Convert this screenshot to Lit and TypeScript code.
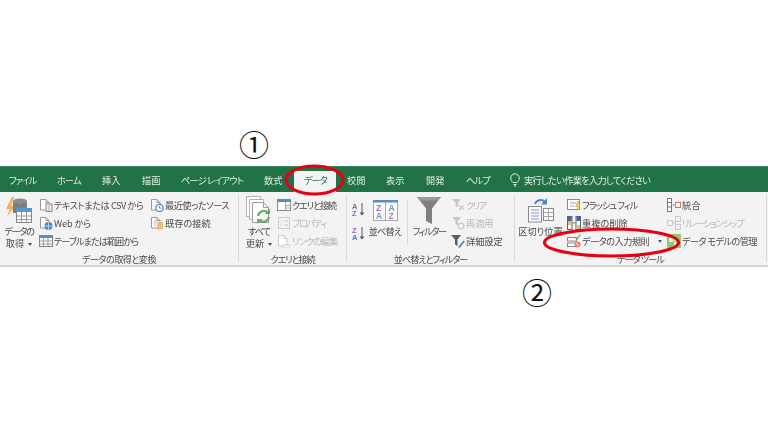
import { LitElement, html, css, svg } from "lit";
import { customElement } from "lit/decorators.js";

const page = (x: unknown, color = "#8a8a8a") => html`<svg viewBox="0 0 14 14" width="14" height="14">${svg`<path d="M1.500 1.500h5.500l3 3v7.500h-8.500z" fill="#fff" stroke="${color}"/><path d="M7 1.500v3h3" fill="none" stroke="${color}"/>`}${x}</svg>`;

const icons: Record<string, unknown> = {
  getData: html`<svg viewBox="0 0 26 27" width="26" height="27">${svg`
    <path d="M6 0 0 12h4l-3 8 8-11H5l3-9z" fill="#f0a33c"/>
    <ellipse cx="14" cy="4" rx="7" ry="2.500" fill="#7b7b7b"/>
    <path d="M7 4v12h7v-3h7V4c-1 3-13 3-14 0z" fill="#6a6a6a"/>
    <rect x="10.500" y="11.500" width="15" height="14" fill="#fff" stroke="#6f6f6f"/>
    <rect x="10" y="11" width="16" height="4" fill="#3f86c8"/>
    <path d="M10.500 19h15M10.500 22.500h15M15.500 15v10M20.500 15v10" stroke="#8c8c8c" fill="none"/>`}</svg>`,
  text: page(svg`<rect x="7" y="6" width="6" height="7.500" fill="#fff" stroke="#777"/><path d="M8.500 8h3M8.500 10h3M8.500 12h3" stroke="#999"/>`),
  web: page(svg`<circle cx="9.500" cy="10" r="4" fill="#2f79bd"/><path d="M5.500 10h8M9.500 6v8" stroke="#cfe3f5" stroke-width=".7"/>`),
  table: html`<svg viewBox="0 0 14 14" width="14" height="14">${svg`<rect x=".5" y="1.500" width="13" height="11" fill="#fff" stroke="#6f6f6f"/><rect x="0" y="1" width="14" height="3" fill="#3f7fb8"/><path d="M.5 7h13M.5 10h13M4.500 4v8M9 4v8" stroke="#909090"/>`}</svg>`,
  recent: page(svg`<circle cx="9.500" cy="10" r="3.700" fill="#fff" stroke="#2f79bd" stroke-width="1.300"/><path d="M9.500 8v2.200h2" stroke="#555" fill="none" stroke-width=".8"/>`),
  existing: page(svg`<rect x="7" y="6" width="6" height="7.500" fill="#efb75a"/><path d="M4 5h3M4 7h2M4 9h2" stroke="#aaa"/>`),
  refresh: html`<svg viewBox="0 0 26 28" width="26" height="28">${svg`
    <path d="M.5.500h14v3H4v17H.5z" fill="#fff" stroke="#a8a8a8"/>
    <path d="M3.500 3.500h14v3H7v17H3.500z" fill="#fff" stroke="#a8a8a8"/>
    <path d="M6.500 6.500h11l5 5v15h-16z" fill="#fff" stroke="#8f8f8f"/>
    <path d="M17.500 6.500v5h5" fill="none" stroke="#8f8f8f"/>
    <path d="M12 20a6 6 0 0 1 10-3.500M23 21a6 6 0 0 1-10 3" fill="none" stroke="#4da04d" stroke-width="2.200"/>
    <path d="M24 12.500v5.500h-5.500zM11 28v-5h5.500z" fill="#4da04d"/>`}</svg>`,
  query: html`<svg viewBox="0 0 14 14" width="14" height="14">${svg`<rect x=".5" y="1.500" width="13" height="11" fill="#fff" stroke="#777"/><rect x="0" y="1" width="14" height="3" fill="#3f7fb8"/><path d="M8.500 4v8.500M8.500 7.500h5M8.500 10h5" stroke="#999"/>`}</svg>`,
  props: html`<svg viewBox="0 0 14 14" width="14" height="14">${svg`<rect x="1.500" y="1.500" width="11" height="11" fill="#f5f5f5" stroke="#c4c4c4"/><path d="M3.500 5h1.500M3.500 9h1.500M7 5h4M7 9h4" stroke="#c4c4c4"/>`}</svg>`,
  links: page(svg`<path d="M6.500 11h5a1.500 1.500 0 0 1 0 3h-5a1.500 1.500 0 0 1 0-3z" fill="#f3f3f3" stroke="#c4c4c4"/>`, "#c4c4c4"),
  sortAz: html`<svg viewBox="0 0 14 15" width="14" height="15">${svg`<text x="0" y="6.500" class="sl a">A</text><text x="0" y="14" class="sl z">Z</text><path d="M10 1v11" stroke="#555"/><path d="M7.500 10.500h5l-2.500 3z" fill="#555"/>`}</svg>`,
  sortZa: html`<svg viewBox="0 0 14 15" width="14" height="15">${svg`<text x="0" y="6.500" class="sl z">Z</text><text x="0" y="14" class="sl a">A</text><path d="M10 1v11" stroke="#555"/><path d="M7.500 10.500h5l-2.500 3z" fill="#555"/>`}</svg>`,
  sortBig: html`<svg viewBox="0 0 25 21" width="25" height="21">${svg`<rect x=".5" y="1" width="24" height="19.500" fill="#fff" stroke="#9a9a9a"/><rect x="0" y="0" width="25" height="2.500" fill="#3f7fb8"/><path d="M12.500 2v18.500" stroke="#9a9a9a"/><text x="3" y="10.500" class="sb z">Z</text><text x="3" y="19" class="sb a">A</text><text x="15.500" y="10.500" class="sb a">A</text><text x="15.500" y="19" class="sb z">Z</text>`}</svg>`,
  funnel: html`<svg viewBox="0 0 24 27" width="24" height="27">${svg`<path d="M0 0h24L15 11.500V27l-6-3V11.500z" fill="#6d6d6d"/><path d="M0 0h24l-3 3.500H3z" fill="#8c8c8c"/>`}</svg>`,
  clear: html`<svg viewBox="0 0 14 14" width="14" height="14">${svg`<path d="M1 1h9L7 5v4.500L4.500 8V5z" fill="#c0c0c0"/><path d="M8 7l5 5M13 7l-5 5" stroke="#c0c0c0" stroke-width="1.200"/>`}</svg>`,
  reapply: html`<svg viewBox="0 0 14 14" width="14" height="14">${svg`<path d="M1 1h9L7 5v4.500L4.500 8V5z" fill="#c0c0c0"/><circle cx="10" cy="10" r="2.800" fill="none" stroke="#c0c0c0" stroke-width="1.200"/>`}</svg>`,
  advanced: html`<svg viewBox="0 0 14 14" width="14" height="14">${svg`<path d="M0 1h10L6.500 5.500V12L4 10.500v-5z" fill="#444"/><path d="M7 13l5.500-6.500 1.500 1L8.500 14z" fill="#2f79bd"/>`}</svg>`,
  split: html`<svg viewBox="0 0 26 26" width="26" height="26">${svg`
    <path d="M7 7a6 6 0 0 1 10-2" fill="none" stroke="#2f79bd" stroke-width="2"/><path d="M19 1v6.500h-6z" fill="#2f79bd"/>
    <rect x=".5" y="9.500" width="13" height="15.500" fill="#fff" stroke="#777"/><path d="M3 13h8M3 16h8M3 19h8M3 22h8" stroke="#5a8fc0"/>
    <rect x="15.500" y="11.500" width="10" height="12" fill="#fff" stroke="#777"/><path d="M15.500 15.500h10M15.500 19.500h10M20.500 11.500v12" stroke="#999"/>`}</svg>`,
  flash: html`<svg viewBox="0 0 14 14" width="14" height="14">${svg`<rect x=".5" y="1.500" width="12" height="10" fill="#fff" stroke="#777"/><path d="M3 5h6M3 8h4" stroke="#7fb07f"/><path d="M10.500 3 8 9h2l-1 5 4-7h-2l1.500-4z" fill="#f0b33c"/>`}</svg>`,
  dedupe: html`<svg viewBox="0 0 14 14" width="14" height="14">${svg`<rect x=".5" y=".5" width="4.500" height="13" fill="#fff" stroke="#2a4e80"/><rect x="9" y=".5" width="4.500" height="13" fill="#fff" stroke="#2a4e80"/><rect x="1" y="1" width="3.500" height="4" fill="#2a4e80"/><rect x="1" y="5" width="3.500" height="4" fill="#f0b33c"/><rect x="9.500" y="1" width="3.500" height="4" fill="#2a4e80"/><rect x="9.500" y="9" width="3.500" height="4" fill="#f0b33c"/><path d="M6 7h2" stroke="#555"/>`}</svg>`,
  validate: html`<svg viewBox="0 0 14 14" width="14" height="14">${svg`<rect x=".5" y="3.500" width="9" height="3.500" fill="#fff" stroke="#777"/><rect x=".5" y="9" width="8" height="3.500" fill="#fff" stroke="#777"/><path d="M8 3l2 2 3.500-4.500" fill="none" stroke="#4da04d" stroke-width="1.200"/><circle cx="10.500" cy="10.500" r="3" fill="#e0705a"/><path d="M9 9l3 3" stroke="#fff"/>`}</svg>`,
  consolidate: html`<svg viewBox="0 0 14 14" width="14" height="14">${svg`<rect x=".5" y=".5" width="4" height="13" fill="#fff" stroke="#666"/><path d="M.5 4.500h4M.5 9h4M5.500 7h2" stroke="#666"/><rect x="8.500" y="4.500" width="5" height="5" fill="#fff" stroke="#d9603b"/>`}</svg>`,
  relation: html`<svg viewBox="0 0 14 14" width="14" height="14">${svg`<rect x=".5" y="4.500" width="5" height="5" fill="none" stroke="#c4c4c4"/><rect x="8.500" y=".5" width="5" height="5" fill="none" stroke="#c4c4c4"/><rect x="8.500" y="8.500" width="5" height="5" fill="none" stroke="#c4c4c4"/><path d="M5.500 7h3M8.500 3v8" stroke="#c4c4c4" fill="none"/>`}</svg>`,
  model: html`<svg viewBox="0 0 14 14" width="14" height="14">${svg`<rect x="0" y="0" width="14" height="14" rx="1" fill="#86bf5a"/><rect x="2" y="4" width="4" height="4" fill="#dff0cf"/><rect x="7" y="8" width="4" height="4" fill="#dff0cf"/><path d="M6 6h3v2" stroke="#fff" fill="none"/>`}</svg>`,
};

type Item = { i: string; t: string; off?: boolean; caret?: boolean };

const tabs: [string, number][] = [
  ["ファイル", 48], ["ホーム", 45], ["挿入", 40], ["描画", 39], ["ページ レイアウト", 83], ["数式", 40],
  ["データ", 43], ["校閲", 39], ["表示", 40], ["開発", 40], ["ヘルプ", 44],
];

/** Tracking per string: (width in the reference − natural width) / characters. */
const track: Record<string, number> = {
  "テキストまたは CSV から": -0.45, "Web から": -0.13, "テーブルまたは範囲から": -1, "最近使ったソース": -0.5,
  "クエリと接続": -1.2, "プロパティ": -1.4, "リンクの編集": -1, "クリア": -1.5, "フラッシュ フィル": -1,
  "データの入力規則": -0.5, "統合": 0.3, "リレーションシップ": -1.2, "データ モデルの管理": -0.6,
  "データの取得と変換": -0.6, "並べ替えとフィルター": -1.1, "データ ツール": -1, "実行したい作業を入力してください": -0.68,
  "ページ レイアウト": -0.8, "ファイル": -1.2, "ホーム": -0.75, "ヘルプ": -0.8, "データ": -1,
  "データの": -1.3, "すべて": -1, "並べ替え": -0.8, "フィルター": -1.4,
};
const sp = (t: string) => `letter-spacing:${track[t] ?? 0}px`;

@customElement("app-root")
export class AppRoot extends LitElement {
  static styles = css`
    :host { display: block; width: 768px; height: 433px; position: relative; overflow: hidden; background: #fff;
      font-family: "Noto Sans CJK JP", "Noto Sans", sans-serif; font-feature-settings: "palt"; font-size: 9.2px; color: #4a4a4a; }
    .page { padding-top: 166px; filter: blur(.4px); }
    .tabs { display: flex; height: 26px; padding-left: 9px; background: #217346; color: #e4efe8; white-space: nowrap; box-sizing: border-box; border-top: 1px solid #3f8a60; isolation: isolate; }
    .tab { display: flex; align-items: center; flex: none; position: relative; }
    .tab.active { color: #217346; }
    .tab.active::before { content: ""; position: absolute; left: -10px; right: 11px; top: 4px; bottom: 0; background: #f3f3f3; z-index: -1; }
    .tell { display: flex; align-items: center; gap: 4px; }
    .ribbon { display: flex; height: 73px; background: #f3f3f3; border-bottom: 2px solid #d6d6d6; align-items: stretch; }
    .group { display: flex; flex-direction: column; margin: 3px 0; border-right: 1px solid #d9d9d9; flex: none; }
    .g1 { width: 238px; } .g2 { width: 107px; } .g3 { width: 167px; } .g4 { width: 251px; }
    .body { flex: 1; display: flex; padding-top: 1px; min-height: 0; }
    .g1 .body { padding-left: 1px; gap: 2px; }
    .g2 .body { padding-left: 3px; gap: 1px; }
    .g3 .body { padding-left: 5px; }
    .g4 .body { padding-left: 4px; gap: 5px; }
    .label { height: 13px; line-height: 15px; margin-bottom: -3px; text-align: center; white-space: nowrap; }
    .big { display: flex; flex-direction: column; align-items: center; text-align: center; line-height: 12px; white-space: nowrap; flex: none; }
    .big .ic { height: 28px; display: flex; align-items: center; justify-content: center; margin-bottom: 1px; }
    .big svg, .row svg { opacity: .85; }
    .col { display: flex; flex-direction: column; flex: none; }
    .c-109 { width: 109px; } .c-54 { width: 54px; } .c-95 { width: 95px; } .c-90 { width: 90px; }
    .row { display: flex; align-items: center; gap: 1px; height: 18px; white-space: nowrap; }
    .row svg { flex: none; }
    .off { color: #b8b8b8; }
    .caret { display: inline-block; width: 0; height: 0; border: 2.500px solid transparent; border-top: 3px solid #555; border-bottom: 0; vertical-align: middle; margin-left: 4px; }
    .row .caret { margin-left: 8px; }
    .sort { display: flex; flex-direction: column; gap: 9px; padding-top: 6px; width: 16px; flex: none; }
    .w36 { width: 36px; } .w34 { width: 34px; } .w43 { width: 43px; }
    .innersep { width: 1px; background: #d9d9d9; margin: 4px 4px 6px 5px; height: 44px; flex: none; }
    .g3 .c-54 { margin-left: 5px; }
    .mark { position: absolute; font-size: 30px; font-weight: 400; line-height: 1; color: #111; font-feature-settings: normal; }
    .m1 { left: 239px; top: 128px; }
    .m2 { left: 522px; top: 276px; }
    .ring { position: absolute; left: 0; top: 0; pointer-events: none; }
    .sl { font: 700 7.500px "Liberation Sans", sans-serif; }
    .sb { font: 700 8.500px "Liberation Sans", sans-serif; }
    .a { fill: #4a7fc0; } .z { fill: #a05fc0; }
  `;

  private row(it: Item) {
    return html`<div class="row ${it.off ? "off" : ""}">${icons[it.i]}<span style=${sp(it.t)}>${it.t}</span>${it.caret ? html`<span class="caret"></span>` : ""}</div>`;
  }
  private col(cls: string, items: Item[]) {
    return html`<div class="col ${cls}">${items.map((i) => this.row(i))}</div>`;
  }
  private big(cls: string, icon: string, lines: string[], caret = false) {
    return html`<div class="big ${cls}">
      <div class="ic">${icons[icon]}</div>
      ${lines.map((l, n) => html`<div><span style=${sp(l)}>${l}</span>${caret && n === lines.length - 1 ? html`<span class="caret"></span>` : ""}</div>`)}
    </div>`;
  }
  private label(t: string) {
    return html`<div class="label"><span style=${sp(t)}>${t}</span></div>`;
  }

  render() {
    const hint = "実行したい作業を入力してください";
    return html`
      <div class="page">
        <div class="tabs">
          ${tabs.map(([t, w]) => html`<span class="tab ${t === "データ" ? "active" : ""}" style="width:${w}px"><span style=${sp(t)}>${t}</span></span>`)}
          <span class="tell">
            <svg viewBox="0 0 10 14" width="10" height="14"><path d="M3 9.500C1.500 8 .8 7 .8 5a4.200 4.200 0 0 1 8.400 0c0 2-.7 3-2.200 4.500zM3.500 11.500h3M4 13h2" fill="none" stroke="#e4efe8"/></svg>
            <span style=${sp(hint)}>${hint}</span>
          </span>
        </div>
        <div class="ribbon">
          <section class="group g1">
            <div class="body">
              ${this.big("w36", "getData", ["データの", "取得"], true)}
              ${this.col("c-109", [
                { i: "text", t: "テキストまたは CSV から" },
                { i: "web", t: "Web から" },
                { i: "table", t: "テーブルまたは範囲から" },
              ])}
              ${this.col("", [
                { i: "recent", t: "最近使ったソース" },
                { i: "existing", t: "既存の接続" },
              ])}
            </div>
            ${this.label("データの取得と変換")}
          </section>
          <section class="group g2">
            <div class="body">
              ${this.big("w34", "refresh", ["すべて", "更新"], true)}
              ${this.col("c-54", [
                { i: "query", t: "クエリと接続" },
                { i: "props", t: "プロパティ", off: true },
                { i: "links", t: "リンクの編集", off: true },
              ])}
            </div>
            ${this.label("クエリと接続")}
          </section>
          <section class="group g3">
            <div class="body">
              <div class="sort">${icons.sortAz}${icons.sortZa}</div>
              ${this.big("w34", "sortBig", ["並べ替え"])}
              <div class="innersep"></div>
              ${this.big("w34", "funnel", ["フィルター"])}
              ${this.col("c-54", [
                { i: "clear", t: "クリア", off: true },
                { i: "reapply", t: "再適用", off: true },
                { i: "advanced", t: "詳細設定" },
              ])}
            </div>
            ${this.label("並べ替えとフィルター")}
          </section>
          <section class="group g4">
            <div class="body">
              ${this.big("w43", "split", ["区切り位置"])}
              ${this.col("c-95", [
                { i: "flash", t: "フラッシュ フィル" },
                { i: "dedupe", t: "重複の削除" },
                { i: "validate", t: "データの入力規則", caret: true },
              ])}
              ${this.col("c-90", [
                { i: "consolidate", t: "統合" },
                { i: "relation", t: "リレーションシップ", off: true },
                { i: "model", t: "データ モデルの管理" },
              ])}
            </div>
            ${this.label("データ ツール")}
          </section>
        </div>
      </div>
      <div class="mark m1">①</div>
      <div class="mark m2">②</div>
      <svg class="ring" width="768" height="433" viewBox="0 0 768 433">
        <ellipse cx="314.500" cy="180" rx="28.500" ry="14" fill="none" stroke="#e60012" stroke-width="3.200"/>
        <ellipse cx="611.500" cy="242.500" rx="67" ry="13.500" fill="none" stroke="#e60012" stroke-width="3.200"/>
      </svg>
    `;
  }
}
